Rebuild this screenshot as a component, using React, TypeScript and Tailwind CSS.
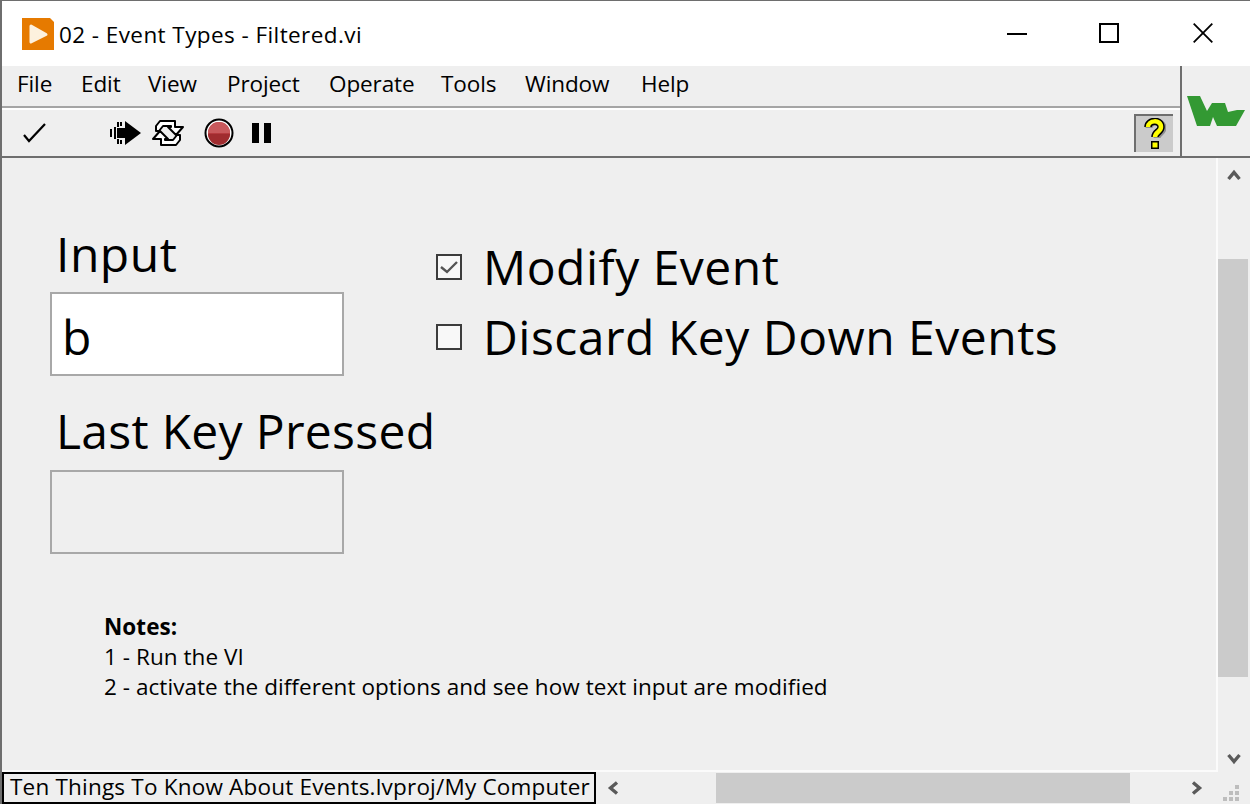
import React from "react";

const font = "font-['Open_Sans','Noto_Sans',sans-serif]";

const menus = [
  { name: "File", w: "w-[64px]" },
  { name: "Edit", w: "w-[67px]" },
  { name: "View", w: "w-[79px]" },
  { name: "Project", w: "w-[102px]" },
  { name: "Operate", w: "w-[112px]" },
  { name: "Tools", w: "w-[84px]" },
  { name: "Window", w: "w-[116px]" },
  { name: "Help", w: "w-[70px]" },
];

const RunArrow = () => (
  <svg width="31" height="26" viewBox="0 0 31 26" shapeRendering="crispEdges">
    <path d="M0 9h2v8H0zM4 7h2v12H4zM7 2h2v5H7zM7 19h2v5H7zM10 2h2v4h-2zM10 20h2v4h-2z" fill="#000" />
    <path d="M7 8h8V1l16 12-16 12v-7H7z" fill="#000" shapeRendering="auto" />
  </svg>
);

const RunContinuous = () => (
  <svg width="34" height="28" viewBox="0 0 34 28">
    <path d="M9 2h15v6h8l-7 8-8-8h3V7h-8l-4 5H5V7z" fill="#fff" stroke="#000" strokeWidth="2" strokeLinejoin="round" />
    <path d="M25 26H10v-6H2l7-8 8 8h-3v1h8l4-5h3v5z" fill="#fff" stroke="#000" strokeWidth="2" strokeLinejoin="round" />
  </svg>
);

const AbortStop = () => (
  <svg width="30" height="30" viewBox="0 0 30 30">
    <circle cx="15" cy="15" r="13.5" fill="#fff" stroke="#000" strokeWidth="2" />
    <circle cx="15" cy="15" r="11" fill="#b53a3e" />
    <path d="M4 15a11 11 0 0 1 22 0z" fill="#c8595c" />
    <path d="M4 16h22a11 11 0 0 1-22 0z" fill="#a02c2f" />
  </svg>
);

const Help = () => (
  <div className="flex h-[38px] w-[39px] items-center justify-center border-t-2 border-l-2 border-[#6e6e6e] bg-[#cbcbcb]">
    <svg width="22" height="32" viewBox="0 0 22 32">
      <path d="M5 10c0-8 14-8 14 0 0 5-6 5-6 10" fill="none" stroke="#8f8f8f" strokeWidth="7" />
      <path d="M4 9c0-7 13-8 13 0 0 5-6 5-6 10" fill="none" stroke="#000" strokeWidth="7.5" />
      <path d="M4 9c0-7 13-8 13 0 0 5-6 5-6 10" fill="none" stroke="#ffff00" strokeWidth="4.5" />
      <rect x="7" y="23" width="8" height="8" fill="#000" />
      <rect x="8.5" y="24.5" width="5" height="5" fill="#ffff00" />
    </svg>
  </div>
);

const Chevron = ({ dir }: { dir: "up" | "down" | "left" | "right" }) => {
  const rot = {
    up: "rotate-0",
    down: "rotate-180",
    left: "-rotate-90",
    right: "rotate-90",
  }[dir];
  return (
    <svg className={rot} width="14" height="12" viewBox="0 0 14 12">
      <path d="M1.5 10 7 3.5 12.5 10" fill="none" stroke="#5a5a5a" strokeWidth="3.4" />
    </svg>
  );
};

const Check = ({ checked, label }: { checked?: boolean; label: string }) => (
  <div className="flex h-[70px] items-center">
    <div className="flex h-[26px] w-[26px] items-center justify-center border-[2px] border-[#3c3c3c] bg-[#f8f8f8]">
      {checked && (
        <svg width="20" height="16" viewBox="0 0 20 16">
          <path d="M2 8l6 5L18 3" fill="none" stroke="#555" strokeWidth="2.4" />
        </svg>
      )}
    </div>
    <span className="ml-[21px] text-[48px] leading-[70px] tracking-[0.5px] whitespace-nowrap text-black">
      {label}
    </span>
  </div>
);

export default function App() {
  return (
    <div className={`${font} flex h-[804px] w-[1250px] flex-col overflow-hidden border-t border-l-2 border-[#6e6e6e] bg-[#efefef] text-black`}>
      {/* title bar */}
      <div className="flex h-[65px] shrink-0 items-center bg-white pl-5">
        <svg width="32" height="32" viewBox="0 0 32 32">
          <path d="M0 0h28l4 4v28H0z" fill="#e67a00" />
          <path d="M9 8l15 8.5L9 24z" fill="#fdf1de" stroke="#fdf1de" strokeWidth="3" strokeLinejoin="round" />
        </svg>
        <span className="ml-[5px] pt-[3px] text-[22.5px] tracking-[0.42px] whitespace-nowrap">
          02 - Event Types - Filtered.vi
        </span>
        <div className="ml-auto flex h-full items-center">
          <svg className="mr-[72px]" width="20" height="2" viewBox="0 0 20 2">
            <path d="M0 1h20" stroke="#000" strokeWidth="2" />
          </svg>
          <svg className="mr-[74px] mb-[2px]" width="20" height="20" viewBox="0 0 20 20">
            <rect x="1" y="1" width="18" height="18" fill="none" stroke="#000" strokeWidth="2" />
          </svg>
          <svg className="mr-[37px] mb-[2px]" width="20" height="20" viewBox="0 0 20 20">
            <path d="M.7.7l18.6 18.6M19.3.7.7 19.3" stroke="#000" strokeWidth="1.8" />
          </svg>
        </div>
      </div>

      {/* menu and toolbar with logo */}
      <div className="flex h-[92px] shrink-0 border-b-2 border-[#6e6e6e]">
        <div className="flex w-[1178px] flex-col">
          <div className="flex h-[42px] items-center border-b-2 border-[#a5a5a5] pb-[4px] pl-[15px] text-[22.5px] tracking-[-0.1px]">
            {menus.map((m) => (
              <span key={m.name} className={`${m.w} shrink-0 whitespace-nowrap`}>
                {m.name}
              </span>
            ))}
          </div>
          <div className="flex h-[48px] items-center border-t-2 border-white pl-[21px]">
            <svg width="24" height="22" viewBox="0 0 24 22">
              <path d="M1 13l5 6L22 2" fill="none" stroke="#000" strokeWidth="2.2" />
            </svg>
            <div className="ml-[63px]"><RunArrow /></div>
            <div className="ml-[10px]"><RunContinuous /></div>
            <div className="ml-[19px]"><AbortStop /></div>
            <div className="ml-[18px] flex gap-[5px]">
              <div className="h-[20px] w-[7px] bg-black" />
              <div className="h-[20px] w-[7px] bg-black" />
            </div>
            <div className="mr-[7px] ml-auto"><Help /></div>
          </div>
        </div>
        <div className="flex flex-1 items-start border-l-2 border-[#6e6e6e] pt-[30px] pl-[5px]">
          <svg width="58" height="30" viewBox="0 0 58 30">
            <path d="M0 0H13L20 15 25 7H38L41 16 50 14H58L49 30H30L26 21 23 30H10Z" fill="#339933" />
          </svg>
        </div>
      </div>

      {/* content and vertical scrollbar */}
      <div className="flex min-h-0 flex-1">
        <div className="flex flex-1 border-r-2 border-b-2 border-[#fbfbfb] pl-[48px]">
          <div className="w-[386px] shrink-0 pt-[60px]">
            <div className="mb-[2px] pl-[6px] text-[48px] leading-[72px] tracking-[0.5px] whitespace-nowrap">Input</div>
            <div className="flex h-[84px] w-[294px] items-center border-2 border-[#a8a8a8] bg-white pt-[6px] pl-[10px] text-[48px]">
              b
            </div>
            <div className="mt-[18px] mb-[2px] pl-[6px] text-[48px] leading-[74px] tracking-[0.3px] whitespace-nowrap">
              Last Key Pressed
            </div>
            <div className="h-[84px] w-[294px] border-2 border-[#a8a8a8]" />
            <div className="mt-[58px] ml-[54px] text-[22.5px] leading-[30px] tracking-[0.05px] whitespace-nowrap">
              <div className="font-bold">Notes:</div>
              <div>1 - Run the VI</div>
              <div>2 - activate the different options and see how text input are modified</div>
            </div>
          </div>
          <div className="pt-[74px]">
            <Check checked label="Modify Event" />
            <Check label="Discard Key Down Events" />
          </div>
        </div>
        <div className="flex w-[32px] shrink-0 flex-col items-center pt-[11px] pb-[7px]">
          <Chevron dir="up" />
          <div className="mt-[78px] h-[418px] w-[30px] self-start bg-[#cbcbcb]" />
          <div className="mt-auto"><Chevron dir="down" /></div>
        </div>
      </div>

      {/* status bar with project path and horizontal scrollbar */}
      <div className="flex h-[32px] shrink-0 items-center">
        <div className="flex h-[32px] w-[594px] shrink-0 items-center border-2 border-black pb-[3px] pl-[6px] text-[22.5px] tracking-[0.2px] whitespace-nowrap">
          Ten Things To Know About Events.lvproj/My Computer
        </div>
        <div className="ml-[10px]"><Chevron dir="left" /></div>
        <div className="ml-[96px] h-[30px] w-[414px] bg-[#cbcbcb]" />
        <div className="ml-[60px]"><Chevron dir="right" /></div>
        <div className="mt-[10px] ml-[19px] grid grid-cols-3 gap-[2px]">
          <div className="col-start-3 h-[4px] w-[4px] bg-[#bdbdbd]" />
          <div className="col-start-2 h-[4px] w-[4px] bg-[#bdbdbd]" />
          <div className="h-[4px] w-[4px] bg-[#bdbdbd]" />
          <div className="h-[4px] w-[4px] bg-[#bdbdbd]" />
          <div className="h-[4px] w-[4px] bg-[#bdbdbd]" />
          <div className="h-[4px] w-[4px] bg-[#bdbdbd]" />
        </div>
      </div>
    </div>
  );
}
